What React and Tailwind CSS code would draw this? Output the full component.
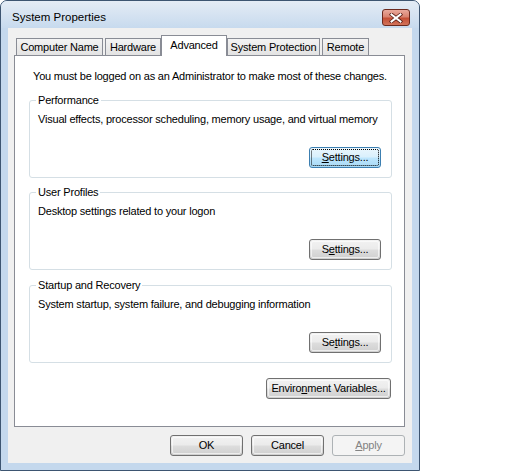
import React from 'react';

const font = { fontFamily: '"Liberation Sans", Arial, sans-serif' };

const Button = ({ children, width, focused, disabled, className = '' }) => {
    let look = 'border-[#707070] bg-[linear-gradient(#f2f2f2_0%,#ebebeb_48%,#dddddd_52%,#cfcfcf_100%)] text-black';
    if (focused) {
        look = 'border-[#3c7fb1] bg-[linear-gradient(#eaf6fd_0%,#d9f0fc_48%,#bee6fd_52%,#a7d9f5_100%)] text-black';
    }
    if (disabled) {
        look = 'border-[#adb2b5] bg-[#f4f4f4] text-[#838383]';
    }
    return (
        <div
            className={`h-[21px] shrink-0 rounded-[3px] border p-px ${look} ${className}`}
            style={{ width }}
        >
            <div
                className={`flex h-full w-full items-center justify-center whitespace-nowrap rounded-[2px] border text-[11px] leading-[13px] ${
                    focused ? 'border-dotted border-black' : disabled ? 'border-transparent' : 'border-white/60'
                }`}
            >
                <span>{children}</span>
            </div>
        </div>
    );
};

const GroupBox = ({ label, text, mnemonic }) => (
    <div className="relative flex h-[78px] flex-col rounded-[3px] border border-[#d5dfe5] pl-[8px] pr-[10px] pt-[12px] pb-[9px]">
        <span className="absolute -top-[7px] left-[6px] bg-white px-[2px] text-[11px] leading-[13px]">{label}</span>
        <p className="whitespace-nowrap text-[11px] leading-[13px]">{text}</p>
        <Button width="72px" focused={mnemonic === 0} className="mt-auto self-end">
            {mnemonic === 0 && (
                <>
                    <span className="underline">S</span>ettings...
                </>
            )}
            {mnemonic === 1 && (
                <>
                    S<span className="underline">e</span>ttings...
                </>
            )}
            {mnemonic === 2 && (
                <>
                    Se<span className="underline">t</span>tings...
                </>
            )}
        </Button>
    </div>
);

const tabs = [
    { name: 'Computer Name', width: 87, ml: 'ml-[2px]' },
    { name: 'Hardware', width: 56, ml: 'ml-[2px]' },
    { name: 'Advanced', width: 66, ml: 'ml-0', active: true },
    { name: 'System Protection', width: 93, ml: 'ml-0' },
    { name: 'Remote', width: 47, ml: 'ml-[2px]' },
];

export default function App() {
    return (
        <div className="h-[472px] w-[512px] bg-white text-black tracking-[-0.2px]" style={font}>
            <div className="flex h-[471px] w-[420px] flex-col rounded-t-[7px] border border-[#3d5571] bg-[#c4d8ed]">
                {/* title bar */}
                <div className="flex h-[27px] shrink-0 items-start justify-between rounded-t-[6px] bg-[linear-gradient(#e4ecf5,#c7daee)] pl-[11px] pr-[9px]">
                    <span className="pt-[9px] text-[11.5px] leading-[15px] tracking-normal text-black">System Properties</span>
                    <div className="mt-[8px] flex h-[17px] w-[28px] items-center justify-center rounded-[3px] border border-[#6b2a1f] bg-[linear-gradient(#e9a99c_0%,#d98370_45%,#c44f36_55%,#d2735a_100%)]">
                        <svg width="14" height="10" viewBox="0 0 14 10">
                            <path d="M2.5 1.5 L11.5 8.5 M11.5 1.5 L2.5 8.5" stroke="#5a2018" strokeWidth="3.6" strokeLinecap="square" />
                            <path d="M2.5 1.5 L11.5 8.5 M11.5 1.5 L2.5 8.5" stroke="#ffffff" strokeWidth="2" strokeLinecap="square" />
                        </svg>
                    </div>
                </div>

                {/* client area */}
                <div className="mx-[7px] flex h-[435px] shrink-0 flex-col bg-[#f0f0f0] pl-[6px] pr-[7px] pt-[7px]">
                    <div className="flex h-[20px] items-end">
                        {tabs.map((t) =>
                            t.active ? (
                                <div
                                    key={t.name}
                                    className={`relative z-10 -mb-px flex h-[21px] items-start justify-center whitespace-nowrap border border-b-0 border-[#898c95] bg-white pt-[3px] text-[11px] leading-[13px] ${t.ml}`}
                                    style={{ width: t.width }}
                                >
                                    {t.name}
                                </div>
                            ) : (
                                <div
                                    key={t.name}
                                    className={`flex h-[17px] items-center justify-center whitespace-nowrap border border-b-0 border-[#898c95] bg-[linear-gradient(#f3f3f3,#e3e3e3)] text-[11px] leading-[13px] ${t.ml}`}
                                    style={{ width: t.width }}
                                >
                                    {t.name}
                                </div>
                            )
                        )}
                    </div>

                    <div className="flex h-[372px] flex-col border border-[#898c95] bg-white pl-[14px] pr-[12px] pt-[14px]">
                        <p className="whitespace-nowrap pl-[4px] text-[11px] leading-[13px]">
                            You must be logged on as an Administrator to make most of these changes.
                        </p>
                        <div className="mt-[17px]">
                            <GroupBox
                                label="Performance"
                                text="Visual effects, processor scheduling, memory usage, and virtual memory"
                                mnemonic={0}
                            />
                        </div>
                        <div className="mt-[14px]">
                            <GroupBox label="User Profiles" text="Desktop settings related to your logon" mnemonic={1} />
                        </div>
                        <div className="mt-[15px]">
                            <GroupBox
                                label="Startup and Recovery"
                                text="System startup, system failure, and debugging information"
                                mnemonic={2}
                            />
                        </div>
                        <Button width="125px" className="mr-[1px] mt-[15px] self-end">
                            Enviro<span className="underline">n</span>ment Variables...
                        </Button>
                    </div>

                    <div className="mt-[8px] flex justify-end gap-[8px]">
                        <Button width="73px">OK</Button>
                        <Button width="73px">Cancel</Button>
                        <Button width="73px" disabled>
                            <span className="underline">A</span>pply
                        </Button>
                    </div>
                </div>
            </div>
        </div>
    );
}
